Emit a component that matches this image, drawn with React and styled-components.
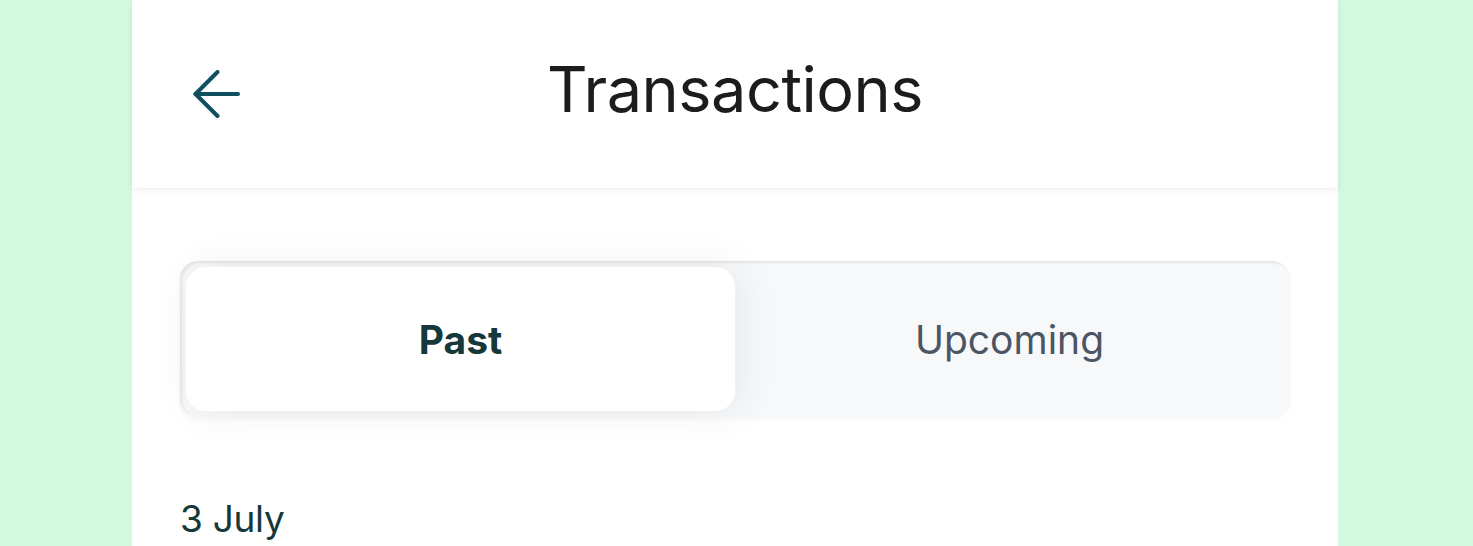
import React from 'react';
import styled, { createGlobalStyle } from 'styled-components';

const Global = createGlobalStyle`
  html, body {
    margin: 0;
    padding: 0;
    background: #d2f8dd;
    font-family: Inter, "Noto Sans", sans-serif;
  }
`

const Page = styled.div`
  display: flex;
  padding-left: 132px;
  height: 546px;
  overflow: hidden;
`

const Panel = styled.div`
  width: 1206px;
  background: #ffffff;
  display: flex;
  flex-direction: column;
`

const Header = styled.header`
  height: 188px;
  display: grid;
  grid-template-columns: 120px 1fr 120px;
  align-items: center;
  box-shadow: 0 2px 6px rgba(0, 0, 0, 0.07);
  position: relative;
  z-index: 1;
`

const Back = styled.button`
  border: none;
  background: none;
  padding: 0;
  margin-left: 61px;
  width: 48px;
  height: 48px;
  display: flex;
  align-items: center;
  justify-content: center;
  cursor: pointer;
`

const Title = styled.h1`
  margin: 0 0 10px;
  text-align: center;
  font-size: 63px;
  font-weight: 400;
  letter-spacing: -0.5px;
  color: #1c1c1e;
`

const Content = styled.main`
  padding: 73px 48px 0;
`

const Segments = styled.div`
  display: grid;
  grid-template-columns: 1fr 1fr;
  padding: 6px;
  height: 156px;
  box-sizing: border-box;
  border-radius: 18px;
  background: #f7f8fa;
  box-shadow: inset 2px 2px 3px rgba(0, 0, 0, 0.08), 0 2px 4px rgba(0, 0, 0, 0.04);
`

const Segment = styled.button`
  border: none;
  border-radius: 20px;
  font-family: inherit;
  font-size: 39px;
  background: ${p => (p.active ? '#ffffff' : 'transparent')};
  color: ${p => (p.active ? '#15383a' : '#4b5563')};
  font-weight: ${p => (p.active ? 700 : 400)};
  box-shadow: ${p => (p.active ? '6px 0 40px rgba(0, 0, 0, 0.07)' : 'none')};
  cursor: pointer;
`

const DateLabel = styled.h2`
  margin: 79px 0 0;
  font-size: 37px;
  font-weight: 400;
  letter-spacing: -0.3px;
  color: #15383a;
`

export default function App() {
  return (
    <>
      <Global />
      <Page>
        <Panel>
          <Header>
            <Back aria-label="Back">
              <svg width="48" height="48" viewBox="0 0 48 48" fill="none" stroke="#0f4f5f" strokeWidth="4" strokeLinecap="round" strokeLinejoin="round">
                <path d="M45 24H2.5" />
                <path d="M24.5 2L2.5 24L24.5 46" />
              </svg>
            </Back>
            <Title>Transactions</Title>
            <div />
          </Header>
          <Content>
            <Segments>
              <Segment active>Past</Segment>
              <Segment>Upcoming</Segment>
            </Segments>
            <DateLabel>3 July</DateLabel>
          </Content>
        </Panel>
      </Page>
    </>
  )
}
